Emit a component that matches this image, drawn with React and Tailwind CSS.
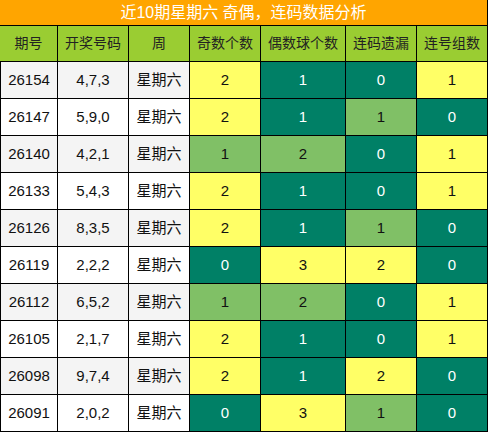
const rows = [
  ["26154", "4,7,3", "Y2", "D1", "D0", "Y1"],
  ["26147", "5,9,0", "Y2", "D1", "L1", "D0"],
  ["26140", "4,2,1", "L1", "L2", "D0", "Y1"],
  ["26133", "5,4,3", "Y2", "D1", "D0", "Y1"],
  ["26126", "8,3,5", "Y2", "D1", "L1", "D0"],
  ["26119", "2,2,2", "D0", "Y3", "Y2", "D0"],
  ["26112", "6,5,2", "L1", "L2", "D0", "Y1"],
  ["26105", "2,1,7", "Y2", "D1", "D0", "Y1"],
  ["26098", "9,7,4", "Y2", "D1", "Y2", "D0"],
  ["26091", "2,0,2", "D0", "Y3", "L1", "D0"],
];

const colorCls = {
  Y: "bg-[#ffff66] text-[#111]",
  D: "bg-[#008066] text-white",
  L: "bg-[#80c066] text-[#111]",
};

const font = { fontFamily: '"Liberation Sans", "Noto Sans CJK SC", sans-serif' };

export default function App() {
  const headers = ["期号", "开奖号码", "周", "奇数个数", "偶数球个数", "连码遗漏", "连号组数"];
  return (
    <div className="w-[488px] h-[432px] bg-white overflow-hidden" style={font}>
      <div className="h-[26px] bg-[#ffa500] border-r border-b border-black text-white text-[16px] leading-[25px] text-center">
        近10期星期六 奇偶，连码数据分析
      </div>
      <div className="grid grid-cols-[58px_71px_61px_71px_85px_71px_71px]">
        {headers.map((h) => (
          <div
            key={h}
            className="h-[36px] bg-[#9acd32] border-r border-b border-black flex items-center justify-center text-[14px] text-[#222]"
          >
            {h}
          </div>
        ))}
        {rows.map((r, ri) => {
          const bg = ri % 2 === 0 ? "bg-[#f4f4f4]" : "bg-white";
          return [
            <div key={ri + "a"} className={`h-[37px] ${bg} border-l border-r border-b border-black flex items-center justify-center text-[15px] text-[#111]`}>{r[0]}</div>,
            <div key={ri + "b"} className={`h-[37px] ${bg} border-r border-b border-black flex items-center justify-center text-[15px] text-[#111]`}>{r[1]}</div>,
            <div key={ri + "c"} className={`h-[37px] ${bg} border-r border-b border-black flex items-center justify-center text-[15px] text-[#111]`}>星期六</div>,
            ...r.slice(2).map((v, vi) => (
              <div key={ri + "v" + vi} className={`h-[37px] ${colorCls[v[0]]} border-r border-b border-black flex items-center justify-center text-[15px]`}>{v.slice(1)}</div>
            )),
          ];
        })}
      </div>
    </div>
  );
}
